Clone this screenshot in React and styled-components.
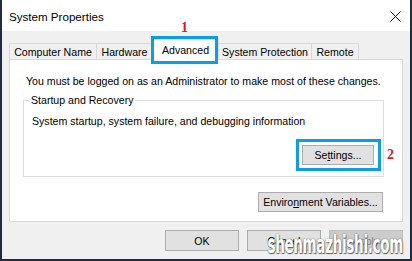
import React from "react";
import styled, { createGlobalStyle } from "styled-components";

const GlobalStyle = createGlobalStyle`
  html, body {
    margin: 0;
    padding: 0;
    background: #ffffff;
  }
  * {
    box-sizing: border-box;
  }
`;

const Window = styled.div`
  position: relative;
  width: 412px;
  height: 261px;
  display: flex;
  flex-direction: column;
  background: #f0f0f0;
  border-left: 2px solid #1f2b47;
  border-right: 2px solid #1f2b47;
  border-bottom: 2px solid #1f2b47;
  font-family: "Liberation Sans", Arial, sans-serif;
  font-size: 10.6px;
  color: #000;
  overflow: hidden;
`;

const TitleBar = styled.div`
  height: 31px;
  flex: none;
  display: flex;
  align-items: center;
  justify-content: space-between;
  padding: 2px 9px 0 7px;
  background: #ffffff;
`;

const Title = styled.span`
  font-size: 11.6px;
  color: #000;
`;

const Body = styled.div`
  flex: 1;
  display: flex;
  flex-direction: column;
  padding: 8px 7px 0 7px;
`;

const TabRow = styled.div`
  display: flex;
  align-items: flex-end;
  height: 21px;
  position: relative;
  z-index: 1;
  margin-bottom: -1px;
`;

const Tab = styled.div`
  position: relative;
  width: ${(p) => p.$w}px;
  height: ${(p) => (p.$active ? 21 : 17)}px;
  display: flex;
  align-items: center;
  justify-content: center;
  padding-top: ${(p) => (p.$active ? 0 : 1)}px;
  background: ${(p) => (p.$active ? "#ffffff" : "#f0f0f0")};
  border: 1px solid #d9d9d9;
  border-bottom: ${(p) => (p.$active ? "none" : "1px solid #d9d9d9")};
  margin-left: ${(p) => (p.$first ? 0 : -1)}px;
  white-space: nowrap;
`;

const Highlight = styled.div`
  position: absolute;
  top: ${(p) => p.$t}px;
  left: ${(p) => p.$l}px;
  right: ${(p) => p.$r}px;
  bottom: ${(p) => p.$b}px;
  border: 3px solid #0a9fe2;
  pointer-events: none;
`;

const Marker = styled.span`
  position: absolute;
  font-family: "Liberation Serif", "Times New Roman", serif;
  font-weight: bold;
  font-size: 14px;
  line-height: 14px;
  color: #e5121f;
`;

const Panel = styled.div`
  width: 394px;
  display: flex;
  flex-direction: column;
  background: #ffffff;
  border: 1px solid #d9d9d9;
  padding: 15px 18px 9px 13px;
`;

const Line = styled.div`
  line-height: 13px;
  white-space: nowrap;
  padding-left: ${(p) => p.$indent || 0}px;
`;

const GroupBox = styled.fieldset`
  margin: 6px 0 0 0;
  padding: 0 9px 11px 8px;
  border: 1px solid #dcdcdc;
  display: flex;
  flex-direction: column;
  min-width: 0;
`;

const Legend = styled.legend`
  margin-left: -3px;
  padding: 0 2px;
  line-height: 13px;
`;

const GroupText = styled(Line)`
  margin-top: 8px;
`;

const ButtonSpot = styled.div`
  position: relative;
  align-self: flex-end;
  margin-top: ${(p) => p.$mt || 0}px;
`;

const Button = styled.div`
  height: ${(p) => p.$h || 20}px;
  width: ${(p) => p.$w}px;
  display: flex;
  align-items: center;
  justify-content: center;
  background: ${(p) => (p.$disabled ? "#cccccc" : "#e1e1e1")};
  border: 1px solid ${(p) => (p.$disabled ? "#bfbfbf" : "#adadad")};
  color: ${(p) => (p.$disabled ? "#838383" : "#000")};
  white-space: nowrap;

  u {
    text-decoration: underline;
    text-underline-offset: 1px;
  }
`;

const EnvSpot = styled(ButtonSpot)`
  margin-right: 1px;
`;

const Footer = styled.div`
  position: relative;
  display: flex;
  justify-content: flex-end;
  gap: 8px;
  margin-top: 8px;
  width: 394px;
`;

const Watermark = styled.span`
  position: absolute;
  right: 0;
  top: 2px;
  font-family: "DejaVu Sans Condensed", "DejaVu Sans", sans-serif;
  font-weight: bold;
  font-size: 25px;
  line-height: 25px;
  letter-spacing: -0.5px;
  color: #ffffff;
  transform: scaleX(0.6);
  transform-origin: right center;
  text-shadow: 0 0 2px rgba(90, 90, 90, 0.9), 1px 1px 1px rgba(60, 60, 60, 0.8);
  white-space: nowrap;
  pointer-events: none;
`;

const CloseIcon = () => (
  <svg width="11" height="11" viewBox="0 0 11 11">
    <path d="M0.5 0.5 L10.5 10.5 M10.5 0.5 L0.5 10.5" stroke="#111" strokeWidth="1" fill="none" />
  </svg>
);

const tabs = [
  { label: "Computer Name", w: 88 },
  { label: "Hardware", w: 57 },
  { label: "Advanced", w: 67, active: true },
  { label: "System Protection", w: 94 },
  { label: "Remote", w: 48 },
];

export default function App() {
  return (
    <>
      <GlobalStyle />
      <Window>
        <TitleBar>
          <Title>System Properties</Title>
          <CloseIcon />
        </TitleBar>
        <Body>
          <TabRow>
            {tabs.map((t, i) => (
              <Tab key={t.label} $w={t.w} $active={t.active} $first={i === 0}>
                {t.label}
                {t.active && (
                  <Highlight $t={-4} $l={-2} $r={0} $b={-4}>
                    <Marker style={{ top: -18, left: 27 }}>1</Marker>
                  </Highlight>
                )}
              </Tab>
            ))}
          </TabRow>
          <Panel>
            <Line $indent={3}>
              You must be logged on as an Administrator to make most of these changes.
            </Line>
            <GroupBox>
              <Legend>Startup and Recovery</Legend>
              <GroupText>System startup, system failure, and debugging information</GroupText>
              <ButtonSpot $mt={17}>
                <Button $w={72}>
                  Se<u>t</u>tings...
                </Button>
                <Highlight $t={-6} $l={-6} $r={-7} $b={-6}>
                  <Marker style={{ top: 6, right: -16 }}>2</Marker>
                </Highlight>
              </ButtonSpot>
            </GroupBox>
            <EnvSpot $mt={15}>
              <Button $w={125}>
                Enviro<u>n</u>ment Variables...
              </Button>
            </EnvSpot>
          </Panel>
          <Footer>
            <Button $w={74} $h={21}>OK</Button>
            <Button $w={74} $h={21}>Cancel</Button>
            <Button $w={74} $h={21} $disabled>Apply</Button>
            <Watermark>shenmazhishi.com</Watermark>
          </Footer>
        </Body>
      </Window>
    </>
  );
}
